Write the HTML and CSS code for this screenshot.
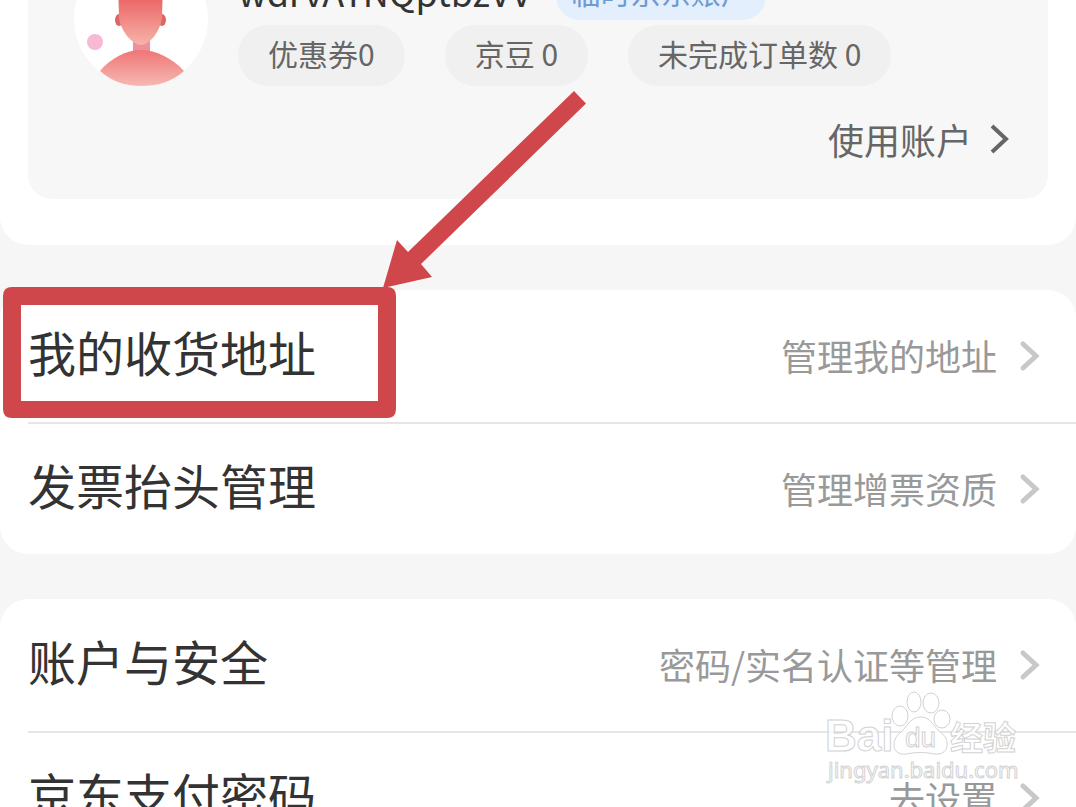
FILE: index.html
```html
<!DOCTYPE html>
<html lang="zh-CN">
<head>
    <meta charset="UTF-8">
    <meta name="viewport" content="width=device-width, initial-scale=1.0">
    <title>账户设置</title>
    <link rel="stylesheet" href="styles.css">
</head>
<body>
<main class="page">
    <section class="profile">
        <div class="profile-card">
            <div class="profile-header">
                <svg class="avatar" viewBox="0 0 134 134" aria-hidden="true">
                    <defs>
                        <linearGradient id="face" x1="0" y1="0" x2="0" y2="1">
                            <stop offset="0.3" stop-color="#ec6a6a"/>
                            <stop offset="1" stop-color="#f7b3aa"/>
                        </linearGradient>
                        <linearGradient id="shirt" x1="0" y1="0" x2="0" y2="1">
                            <stop offset="0" stop-color="#ee7676"/>
                            <stop offset="1" stop-color="#f6b9b2"/>
                        </linearGradient>
                    </defs>
                    <circle cx="67" cy="67" r="67" fill="#fff"/>
                    <circle cx="21" cy="90" r="8" fill="#f7b9d5"/>
                    <path d="M59 86h17v16H59z" fill="#ee8f9c"/>
                    <ellipse cx="45" cy="68" rx="4" ry="6" fill="#dc6666"/>
                    <ellipse cx="88" cy="68" rx="4" ry="6" fill="#dc6666"/>
                    <path d="M44 30h45l-1 35c-1 13-12 28-21 28S46 78 45 65z" fill="url(#face)"/>
                    <path d="M26 119C37 106 52 98 67 98s31 8 43 21c-12 11-27 15-43 15s-30-5-41-15z" fill="url(#shirt)"/>
                </svg>
                <div class="profile-info">
                    <div class="name-row">
                        <span class="name">wdrvAYNQptbzVV</span>
                        <span class="badge">临时京东账户</span>
                    </div>
                    <div class="tags">
                        <span class="tag">优惠券0</span>
                        <span class="tag">京豆 0</span>
                        <span class="tag">未完成订单数 0</span>
                    </div>
                </div>
            </div>
            <a class="use-account" href="#">
                <span>使用账户</span>
                <svg class="arrow" viewBox="0 0 20 32" aria-hidden="true"><path d="M2 3l14 13L2 29"/></svg>
            </a>
        </div>
    </section>

    <nav class="group">
        <a class="row" href="#">
            <span class="row-title">我的收货地址</span>
            <span class="row-desc">管理我的地址</span>
            <svg class="chevron" viewBox="0 0 22 32" aria-hidden="true"><path d="M4 4l13 12L4 28"/></svg>
        </a>
        <a class="row" href="#">
            <span class="row-title">发票抬头管理</span>
            <span class="row-desc">管理增票资质</span>
            <svg class="chevron" viewBox="0 0 22 32" aria-hidden="true"><path d="M4 4l13 12L4 28"/></svg>
        </a>
    </nav>

    <nav class="group">
        <a class="row" href="#">
            <span class="row-title">账户与安全</span>
            <span class="row-desc">密码/实名认证等管理</span>
            <svg class="chevron" viewBox="0 0 22 32" aria-hidden="true"><path d="M4 4l13 12L4 28"/></svg>
        </a>
        <a class="row" href="#">
            <span class="row-title">京东支付密码</span>
            <span class="row-desc">去设置</span>
            <svg class="chevron" viewBox="0 0 22 32" aria-hidden="true"><path d="M4 4l13 12L4 28"/></svg>
        </a>
    </nav>

    <!-- red frame and arrow around the address row -->
    <svg class="marker" viewBox="0 0 600 430" aria-hidden="true">
        <path fill-rule="evenodd" d="M12 287h375q9 0 9 9v113q0 9-9 9H12q-9 0-9-9V296q0-9 9-9zM21 305v96h357v-96z"/>
        <path d="M574 91l12 12.500L421 264l11 13-49 11 14-48 11 12z"/>
    </svg>

    <svg class="watermark" viewBox="0 0 200 100" aria-hidden="true">
        <text class="wm-latin" x="3" y="66">Bai</text>
        <path d="M99 32c-10 0-13 8-19 14-6 5-8 9-8 14 0 7 6 10 13 9 9-2 18-2 27 0 8 1 14-3 13-11 0-5-3-8-8-12-6-6-9-14-18-14z"/>
        <ellipse cx="78" cy="31" rx="8" ry="10"/>
        <ellipse cx="92" cy="17" rx="7" ry="10"/>
        <ellipse cx="109" cy="18" rx="8" ry="10"/>
        <ellipse cx="120" cy="34" rx="8" ry="9"/>
        <text class="wm-du" x="83" y="62">du</text>
        <text class="wm-cjk" x="128" y="65">经验</text>
        <text class="wm-url" x="6" y="93">jingyan.baidu.com</text>
    </svg>
</main>
</body>
</html>
```

FILE: styles.css
```css
* {
    box-sizing: border-box;
}
body {
    margin: 0;
    height: 100vh;
    overflow: hidden;
    background: #f6f6f6;
    color: #333;
    font-family: "Noto Sans CJK SC", sans-serif;
}
a {
    color: inherit;
    text-decoration: none;
}
.page {
    position: relative;
    display: flow-root;
}

/* profile, scrolled partly out of view */
.profile {
    margin-top: -116px;
    padding: 28px 28px 46px;
    background: #fff;
    border-radius: 0 0 28px 28px;
}
.profile-card {
    padding: 40px 38px 33px 46px;
    background: #f7f7f7;
    border-radius: 24px;
}
.profile-header {
    display: flex;
    align-items: flex-end;
    gap: 30px;
}
.avatar {
    width: 134px;
    height: 134px;
    flex: none;
}
.name-row {
    display: flex;
    align-items: center;
    gap: 24px;
    height: 50px;
    margin-bottom: 5px;
}
.name {
    padding-bottom: 8px;
    font-size: 36px;
    line-height: 42px;
}
.badge {
    padding: 0 15px 8px;
    border-radius: 24px;
    background: #e3effd;
    color: #6f9bd1;
    font-size: 30px;
    line-height: 42px;
}
.tags {
    display: flex;
    gap: 40px;
}
.tag {
    padding: 0 30px 4px;
    border-radius: 30px;
    background: #f1f0f0;
    color: #666;
    font-size: 30px;
    line-height: 57px;
    white-space: nowrap;
}
.use-account {
    display: flex;
    align-items: center;
    justify-content: flex-end;
    gap: 18px;
    margin-top: 28px;
    padding-bottom: 2px;
    color: #666;
    font-size: 36px;
    line-height: 50px;
}
.arrow {
    width: 20px;
    height: 32px;
    fill: none;
    stroke: #666;
    stroke-width: 4;
}

/* settings list */
.group {
    margin-top: 45px;
    padding-left: 28px;
    background: #fff;
    border-radius: 28px;
}
.row {
    display: flex;
    align-items: center;
    height: 132px;
    padding-right: 35px;
}
.row + .row {
    border-top: 2px solid #e6e6e6;
}
.row-title {
    flex: 1;
    padding-bottom: 10px;
    font-size: 48px;
    line-height: 64px;
}
.row-desc {
    margin-right: 22px;
    padding-bottom: 2px;
    color: #999;
    font-size: 36px;
    line-height: 48px;
}
.chevron {
    width: 22px;
    height: 32px;
    fill: none;
    stroke: #c8c8c8;
    stroke-width: 5;
    stroke-linecap: round;
}

.marker {
    position: absolute;
    left: 0;
    top: 0;
    width: 600px;
    height: 430px;
    fill: #cf474b;
    pointer-events: none;
}
.watermark {
    position: absolute;
    right: 54px;
    top: 685px;
    width: 200px;
    height: 100px;
    fill: rgba(255, 255, 255, 0.8);
    stroke: #d2d2d2;
    stroke-width: 1;
    pointer-events: none;
}
.wm-latin {
    font: bold 44px "Liberation Sans", sans-serif;
}
.wm-du {
    font: 28px "Liberation Sans", sans-serif;
}
.wm-cjk {
    font: bold 33px "Noto Sans CJK SC", sans-serif;
}
.wm-url {
    font: 22px "Noto Sans", sans-serif;
}
```
